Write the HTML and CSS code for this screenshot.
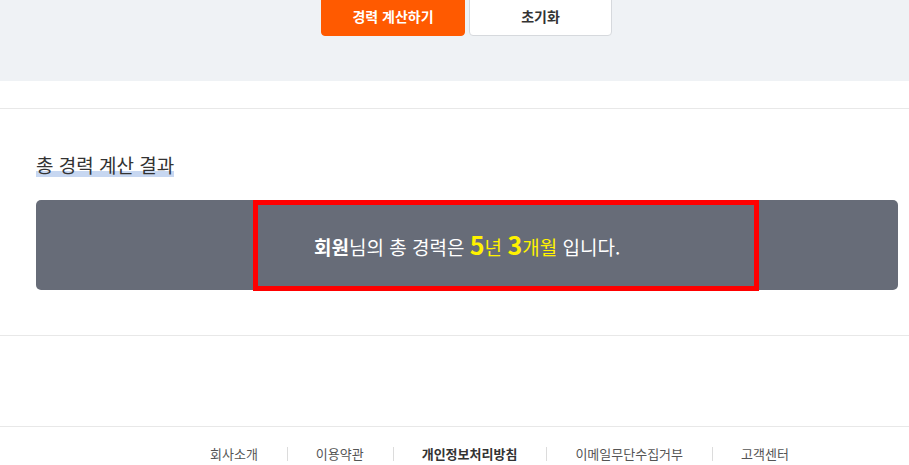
FILE: index.html
```html
<!DOCTYPE html>
<html lang="ko">
<head>
<meta charset="utf-8">
<link rel="stylesheet" href="styles.css">
</head>
<body>
<div class="top">
  <div class="btns">
    <button class="btn btn-primary">경력 계산하기</button>
    <button class="btn btn-reset">초기화</button>
  </div>
</div>
<div class="gap"></div>
<section class="result">
  <h2 class="title"><span class="title-text">총 경력 계산 결과</span></h2>
  <div class="result-box">
    <p class="result-text"><b>회원</b>님의 총 경력은 <span class="hl"><b class="num">5</b>년 <b class="num">3</b>개월</span> 입니다.</p>
    <div class="mark"></div>
  </div>
</section>
<footer class="footer">
  <nav class="links">
    <a>회사소개</a><i class="sep"></i>
    <a>이용약관</a><i class="sep"></i>
    <a class="strong">개인정보처리방침</a><i class="sep"></i>
    <a>이메일무단수집거부</a><i class="sep"></i>
    <a>고객센터</a>
  </nav>
</footer>
</body>
</html>
```
FILE: styles.css
```css
* { box-sizing: border-box; }
body {
  margin: 0;
  font-family: "Noto Sans CJK KR", "Noto Sans", sans-serif;
  color: #333;
  background: #fff;
  overflow: hidden;
}
.top {
  background: #eff2f5;
  height: 81px;
}
.btns {
  display: flex;
  gap: 4px;
  padding-left: 321px;
  transform: translateY(-7px);
}
.btn {
  height: 43px;
  border-radius: 4px;
  font-family: inherit;
  font-size: 14px;
  font-weight: 700;
  padding: 2px 0 0;
  cursor: pointer;
}
.btn-primary {
  width: 144px;
  background: #ff5a00;
  border: 1px solid #ff5a00;
  color: #fff;
}
.btn-reset {
  width: 143px;
  background: #fff;
  border: 1px solid #d6d9dd;
  color: #333;
}
.gap {
  height: 28px;
  border-bottom: 1px solid #e8e8e8;
}
.result {
  padding: 43px 11px 45px 36px;
  border-bottom: 1px solid #e8e8e8;
}
.title {
  margin: 0 0 22px;
  font-size: 19px;
  font-weight: 400;
  line-height: 26px;
  height: 26px;
}
.title-text {
  display: inline-block;
  line-height: 26px;
  background: linear-gradient(to top, transparent 0px, #c7d7f1 0px, #c7d7f1 6px, transparent 6px);
  background-position: 0 -1px;
  background-repeat: no-repeat;
  color: #333;
}
.result-box {
  position: relative;
  height: 90px;
  background: #676c78;
  border-radius: 5px;
  display: flex;
  align-items: center;
  padding-left: 278px;
}
.result-text {
  margin: 0;
  color: #fff;
  font-size: 19px;
  line-height: 26px;
}
.result-text b { font-weight: 700; }
.hl { color: #fff200; }
.num {
  font-size: 25px;
}
.mark {
  position: absolute;
  left: 217px;
  top: 0;
  width: 506px;
  height: 91px;
  border: 5px solid #ff0000;
}
.footer {
  margin-top: 90px;
  border-top: 1px solid #e8e8e8;
  padding-top: 17px;
}
.links {
  display: flex;
  align-items: center;
  padding-left: 210px;
  font-size: 13px;
  line-height: 19px;
}
.links a {
  color: #555;
}
.links a.strong {
  color: #333;
  font-weight: 700;
}
.sep {
  display: block;
  width: 1px;
  height: 14px;
  background: #dcdcdc;
  margin: 0 28px 0 29px;
}
```
